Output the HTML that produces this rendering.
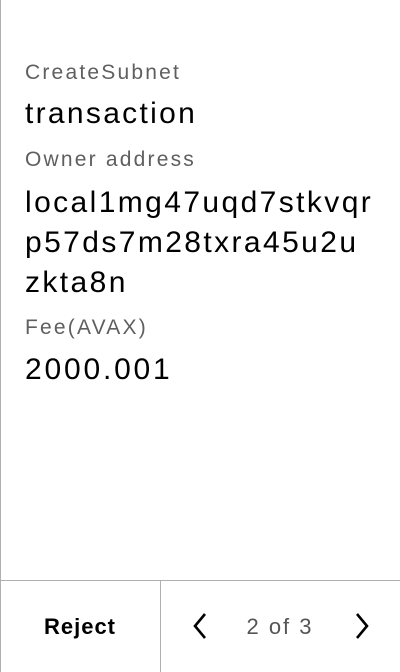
<!DOCTYPE html>
<html><head><style>
html,body{margin:0;padding:0;background:#fff;}
body{width:400px;height:672px;position:relative;overflow:hidden;font-family:"Liberation Sans",sans-serif;}
.lb{position:absolute;left:0;top:0;width:1px;height:672px;background:#b0b0b0;}
.t{position:absolute;left:25px;white-space:nowrap;line-height:1;}
.l{font-size:21px;color:#5f5f5f;letter-spacing:2.2px;}
.v{font-size:30px;color:#000;letter-spacing:2.3px;}
.bar{position:absolute;left:0;top:580px;width:400px;height:1px;background:#b0b0b0;}
.div{position:absolute;left:160px;top:580px;width:1px;height:92px;background:#b0b0b0;}
</style></head><body>
<div class="lb"></div>
<div class="t l" style="top:62px">CreateSubnet</div>
<div class="t v" style="top:99px">transaction</div>
<div class="t l" style="top:149px">Owner address</div>
<div class="t v" style="top:188px;letter-spacing:2.4px">local1mg47uqd7stkvqr</div>
<div class="t v" style="top:228px;letter-spacing:2.4px">p57ds7m28txra45u2u</div>
<div class="t v" style="top:268px;letter-spacing:2.4px">zkta8n</div>
<div class="t l" style="top:317px">Fee(AVAX)</div>
<div class="t v" style="top:355px;letter-spacing:2.8px">2000.001</div>
<div class="bar"></div>
<div class="div"></div>
<div style="position:absolute;left:0;top:614px;width:160px;text-align:center;font-size:22px;font-weight:bold;color:#000;letter-spacing:1px;">Reject</div>
<svg style="position:absolute;left:190px;top:612px" width="20" height="28" viewBox="0 0 20 28"><path d="M15 2 L5 14 L15 26" fill="none" stroke="#000" stroke-width="2.6"/></svg>
<div style="position:absolute;left:238px;top:614px;width:84px;text-align:center;font-size:22px;color:#555;letter-spacing:2px;">2 of 3</div>
<svg style="position:absolute;left:352px;top:612px" width="20" height="28" viewBox="0 0 20 28"><path d="M5 2 L15 14 L5 26" fill="none" stroke="#000" stroke-width="2.6"/></svg>
</body></html>
